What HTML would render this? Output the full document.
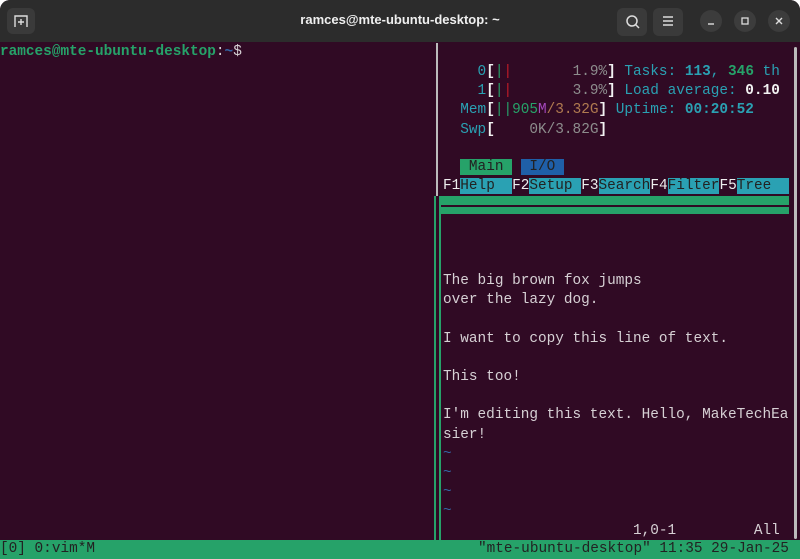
<!DOCTYPE html>
<html><head><meta charset="utf-8"><style>
body{margin:0;width:800px;height:559px;overflow:hidden;background:#fff;}
#win{position:absolute;left:0;top:0;width:800px;height:559px;background:#300a24;border-radius:10px 10px 0 0;overflow:hidden;}
#tb{position:absolute;left:0;top:0;width:800px;height:42px;background:#2c2c2c;}
.title{position:absolute;left:0;width:800px;top:12px;text-align:center;color:#f0f0f0;font:bold 13px "Liberation Sans",sans-serif;}
.btn{position:absolute;background:#3a3a3a;border-radius:6px;}
.cb{position:absolute;width:22px;height:22px;border-radius:11px;background:#3c3c3c;top:10px;}
.t{position:absolute;font-family:"Liberation Mono",monospace;font-size:14.4px;line-height:19.2px;white-space:pre;color:#d6d0d4;}
.c{color:#2aa1b3}.g{color:#26a269}.r{color:#c01c28}.w{color:#f2f2f2;font-weight:bold}.gr{color:#8d8d8d}
</style></head><body><div id="win">
<div id="tb">
<div class="btn" style="left:7px;top:8px;width:28px;height:26px"></div>
<svg style="position:absolute;left:13px;top:14px" width="16" height="14"><path d="M2 13V2h12v11M8 5v6M5 8h6" stroke="#ddd" stroke-width="1.4" fill="none"/></svg>
<div class="title">ramces@mte-ubuntu-desktop: ~</div>
<div class="btn" style="left:617px;top:8px;width:30px;height:28px"></div>
<svg style="position:absolute;left:625px;top:14px" width="16" height="16"><circle cx="7" cy="7" r="5" stroke="#ddd" stroke-width="1.5" fill="none"/><path d="M10.5 10.5L14 14" stroke="#ddd" stroke-width="1.5"/></svg>
<div class="btn" style="left:653px;top:8px;width:30px;height:28px"></div>
<svg style="position:absolute;left:662px;top:15px" width="12" height="12"><path d="M1 2h10M1 6h10M1 10h10" stroke="#ddd" stroke-width="1.4"/></svg>
<div class="cb" style="left:700px"></div><svg style="position:absolute;left:707px;top:18px" width="8" height="8"><path d="M1 6h6" stroke="#ddd" stroke-width="1.4"/></svg>
<div class="cb" style="left:734px"></div><svg style="position:absolute;left:741px;top:17px" width="8" height="8"><rect x="1" y="1" width="6" height="6" stroke="#ddd" stroke-width="1.3" fill="none"/></svg>
<div class="cb" style="left:768px"></div><svg style="position:absolute;left:775px;top:17px" width="8" height="8"><path d="M1 1l6 6M7 1l-6 6" stroke="#ddd" stroke-width="1.4"/></svg>
</div>
<div class="t" style="left:0;top:43px"><span style="color:#26a269;font-weight:bold">ramces@mte-ubuntu-desktop</span>:<span style="color:#3465a4;font-weight:bold">~</span>$</div>
<div style="position:absolute;left:436px;top:43px;width:2px;height:153px;background:#bbb"></div>
<div style="position:absolute;left:434px;top:196px;width:2px;height:344px;background:#26a269"></div>
<div style="position:absolute;left:439px;top:196px;width:2px;height:344px;background:#26a269"></div>
<div style="position:absolute;left:441px;top:196px;width:348px;height:9px;background:#26a269"></div>
<div style="position:absolute;left:441px;top:207px;width:348px;height:7px;background:#26a269"></div>
<div style="position:absolute;left:794px;top:47px;width:3px;height:492px;background:#bbb;border-radius:2px"></div>
<div class="t" style="left:443px;top:63px"><span class="c">    0</span><span class="w">[</span><span class="g">|</span><span class="r">|</span>       <span class="gr">1.9%</span><span class="w">]</span> <span class="c">Tasks: </span><span class="c" style="font-weight:bold">113</span><span class="c">, </span><span class="g" style="font-weight:bold">346</span><span class="c"> th</span>
<span class="c">    1</span><span class="w">[</span><span class="g">|</span><span class="r">|</span>       <span class="gr">3.9%</span><span class="w">]</span> <span class="c">Load average: </span><span class="w">0.10</span>
<span class="c">  Mem</span><span class="w">[</span><span class="g">||905</span><span style="color:#a347ba">M</span><span style="color:#b07a50">/3.32G</span><span class="w">]</span> <span class="c">Uptime: </span><span class="c" style="font-weight:bold">00:20:52</span>
<span class="c">  Swp</span><span class="w">[</span>    <span class="gr">0K/3.82G</span><span class="w">]</span></div>
<div class="t" style="left:443px;top:158px">  <span style="background:#26a269;color:#222"> Main </span> <span style="background:#1f5fa8;color:#222"> I/O </span></div>
<div class="t" style="left:443px;top:177px;color:#eee"><span>F1</span><span style="background:#2aa1b3;color:#222">Help  </span>F2<span style="background:#2aa1b3;color:#222">Setup </span>F3<span style="background:#2aa1b3;color:#222">Search</span>F4<span style="background:#2aa1b3;color:#222">Filter</span>F5<span style="background:#2aa1b3;color:#222">Tree  </span></div>
<div class="t" style="left:443px;top:272px">The big brown fox jumps
over the lazy dog.

I want to copy this line of text.

This too!

I'm editing this text. Hello, MakeTechEa
sier!
<span style="color:#3465a4">~
~
~
~</span>
<span>                      1,0-1         All</span></div>
<div style="position:absolute;left:0;top:540px;width:800px;height:19px;background:#26a269"></div>
<div class="t" style="left:0;top:540px;color:#222">[0] 0:vim*M</div>
<div class="t" style="left:478px;top:540px;color:#222">"mte-ubuntu-desktop" 11:35 29-Jan-25</div>
</div></body></html>
